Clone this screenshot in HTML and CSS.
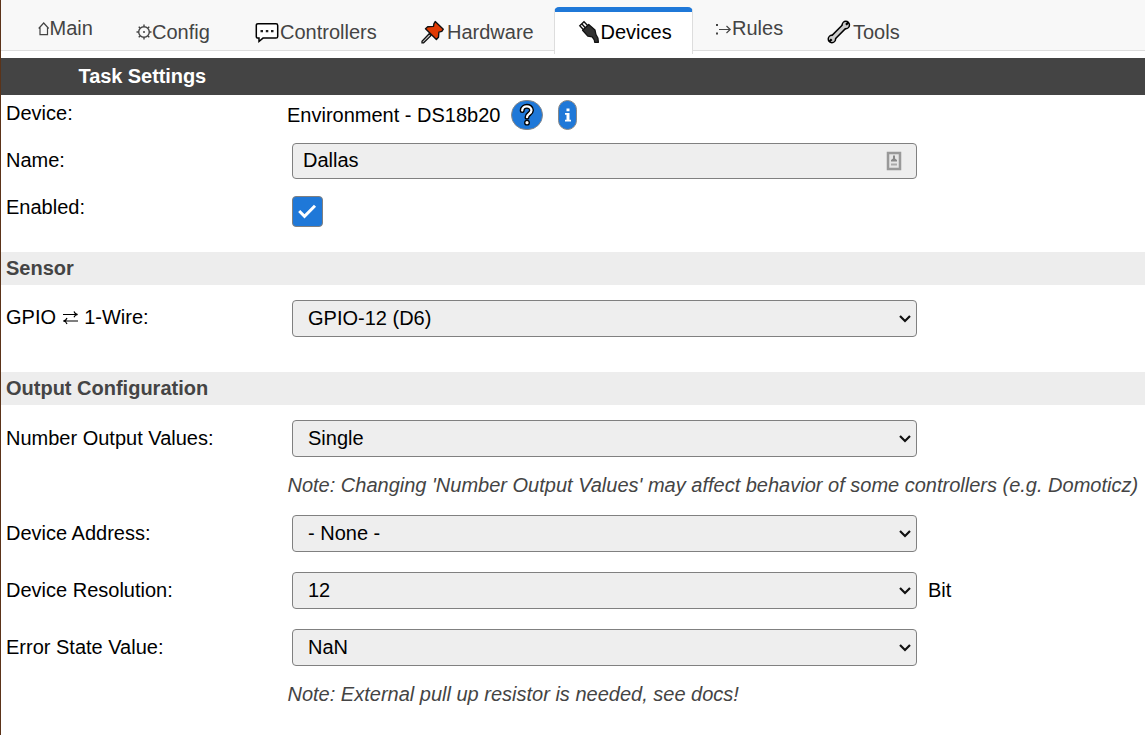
FILE: index.html
```html
<!DOCTYPE html>
<html lang="en">
<head>
<meta charset="utf-8">
<title>Task Settings</title>
<link rel="stylesheet" href="styles.css">
</head>
<body>
<nav class="tabs">
  <a class="tab raised main"><svg class="ico" width="12" height="22" viewBox="0 0 12 22"><path d="M.7 12.500 5.700 7l5 5.500M2 11.500v7.100h7.500v-7.100" fill="none" stroke="#444" stroke-width="1.200"/></svg><span class="t-main">Main</span></a>
  <a class="tab"><svg class="ico" width="16" height="24" viewBox="0 0 16 24"><circle cx="8" cy="12" r="5.300" fill="none" stroke="#444" stroke-width="1.400"/><circle cx="8" cy="12" r="1" fill="#444"/><path d="M8 4.500v2M8 17.500v2M.5 12h2M13.500 12h2M2.700 6.700l1.400 1.400M11.900 15.900l1.400 1.400M2.700 17.300l1.400-1.400M11.900 8.100l1.400-1.400" stroke="#444" stroke-width="1.400"/></svg><span class="t-config">Config</span></a>
  <a class="tab"><svg class="ico" width="25" height="24" viewBox="0 0 25 24"><path d="M3 3.700h18q1.700 0 1.700 1.700v11q0 1.700-1.700 1.700H8L4 21.500v-3.400H3q-1.700 0-1.700-1.700v-11q0-1.700 1.700-1.700z" fill="#fff" stroke="#000" stroke-width="1.500"/><path d="M5.500 10h2.500v2.300H5.500zM10.800 10h2.500v2.300h-2.500zM16 10h2.500v2.300H16z" fill="#222"/></svg><span class="t-controllers">Controllers</span></a>
  <a class="tab"><svg class="ico" width="25" height="24" viewBox="0 0 25 24"><path d="M8.200 13.800 1 21.200v1.600h1.600l7.400-7.200z" fill="#ccc" stroke="#111" stroke-width="1.300"/><path d="M14.200 1.600 22.300 9.200l-1.500 2.200-2.900.7-.4 5.200-2.100 2.200L4.500 8.700l2.200-1.900 5.800-.4.400-2.600z" fill="#e03a04" stroke="#111" stroke-width="1.400" stroke-linejoin="round"/></svg><span class="t-hardware">Hardware</span></a>
  <a class="tab active"><svg class="ico" width="23" height="24" viewBox="0 0 23 24"><path d="M1.800 5.800 6 1.800l5 5.200-4.300 4z" fill="#fff" stroke="#111" stroke-width="1.400"/><path d="m3.900 4 5 5.500" stroke="#111" stroke-width="1.400"/><path d="m4.600 10.200 6.100-5.700 6.300 5.600.9 4.300q2.600 3.200 2.500 7.900h-3.700q-.2-3.400-2.500-5.400l-4.400-.8z" fill="#303030" stroke="#111" stroke-width="1.300" stroke-linejoin="round"/></svg><span class="t-devices">Devices</span></a>
  <a class="tab raised rules"><svg class="ico" width="17" height="24" viewBox="0 0 17 24"><path d="M1 8h2v2H1zM1 16.500h2v2H1z" fill="#444"/><path d="M4 13.500h11.500M11.500 10l3.700 3.500-3.700 3.500" fill="none" stroke="#444" stroke-width="1.200"/></svg><span class="t-rules">Rules</span></a>
  <a class="tab"><svg class="ico" width="25" height="24" viewBox="0 0 25 24"><path d="M5 18.800 18.500 5.200" stroke="#000" stroke-width="6.200"/><circle cx="18.800" cy="5" r="4.400"/><circle cx="4.900" cy="19" r="4.400"/><path d="M5 18.800 18.500 5.200" stroke="#ccc" stroke-width="3.200"/><circle cx="18.800" cy="5" r="2.900" fill="#ccc"/><circle cx="4.900" cy="19" r="2.900" fill="#ccc"/><path d="m19 4.700 2.600-2.600M4.700 19.200l-2.600 2.600" stroke="#000" stroke-width="2.200"/></svg><span class="t-tools">Tools</span></a>
</nav>
<h1 class="title">Task Settings</h1>
<main>
  <div class="row device"><span class="label">Device:</span>
    <div class="value"><span class="env">Environment - DS18b20</span>
      <span class="pill help"><svg width="18" height="24" viewBox="0 0 18 24"><path d="M4.200 7.500C4.200 2 13.500 2 13.500 7.300c0 3.700-4.500 3.400-4.500 6.900" fill="none" stroke="#000" stroke-width="5" stroke-linecap="round"/><circle cx="9" cy="19.700" r="2.900" fill="#000"/><path d="M4.200 7.500C4.200 2 13.500 2 13.500 7.300c0 3.700-4.500 3.400-4.500 6.900" fill="none" stroke="#fff" stroke-width="2.300" stroke-linecap="round"/><circle cx="9" cy="19.700" r="1.600" fill="#fff"/></svg></span>
      <span class="pill info"><svg width="8" height="16" viewBox="0 0 8 16"><path d="M2.500 1.500h3v2.700h-3zM1 6h4.500v6.700H7V14.500H1v-1.800h1.500V7.700H1z" fill="#fff"/></svg></span></div></div>
  <div class="row name"><span class="label">Name:</span><div class="control input"><span class="t-dallas">Dallas</span><svg class="card" width="16" height="20" viewBox="0 0 16 20"><path d="M2 2h12v16H2z" fill="#e6e6e6" stroke="#999" stroke-width="2.500"/><path d="M7 4.500h2v3l2 1.500v1.500H5V9l2-1.500z" fill="#888"/><path d="M5 12.500h6v2H5z" fill="#aaa"/></svg></div></div>
  <div class="row enabled"><span class="label">Enabled:</span><span class="check"><svg width="21" height="18" viewBox="0 0 21 18"><path d="m2.200 8 5.300 5.300L18 2.800" fill="none" stroke="#fff" stroke-width="3"/></svg></span></div>
  <h2 class="section">Sensor</h2>
  <div class="row gpio"><span class="label">GPIO <svg class="swap" width="17" height="16" viewBox="0 0 17 16"><path d="M1 4.500h14.500M12 1.500q.7 2.500 3.700 3M16 11H1.500M5 8q-.7 2.500-3.700 3 3 .5 3.700 3M12 7.200q.7-2.200 3.700-2.700" fill="none" stroke="#000" stroke-width="1.200"/></svg> 1-Wire:</span><div class="control select"><span>GPIO-12 (D6)</span><svg class="chev" width="14" height="10" viewBox="0 0 14 10"><path d="m2 2 5 5 5-5" fill="none" stroke="#111" stroke-width="2.200"/></svg></div></div>
  <h2 class="section">Output Configuration</h2>
  <div class="row number"><span class="label">Number Output Values:</span><div class="control select"><span>Single</span><svg class="chev" width="14" height="10" viewBox="0 0 14 10"><path d="m2 2 5 5 5-5" fill="none" stroke="#111" stroke-width="2.200"/></svg></div></div>
  <p class="note"><span class="t-note">Note: Changing 'Number Output Values' may affect behavior of some controllers (e.g. Domoticz)</span></p>
  <div class="row"><span class="label">Device Address:</span><div class="control select"><span>- None -</span><svg class="chev" width="14" height="10" viewBox="0 0 14 10"><path d="m2 2 5 5 5-5" fill="none" stroke="#111" stroke-width="2.200"/></svg></div></div>
  <div class="row"><span class="label">Device Resolution:</span><div class="control select"><span>12</span><svg class="chev" width="14" height="10" viewBox="0 0 14 10"><path d="m2 2 5 5 5-5" fill="none" stroke="#111" stroke-width="2.200"/></svg></div><span class="unit">Bit</span></div>
  <div class="row"><span class="label">Error State Value:</span><div class="control select"><span>NaN</span><svg class="chev" width="14" height="10" viewBox="0 0 14 10"><path d="m2 2 5 5 5-5" fill="none" stroke="#111" stroke-width="2.200"/></svg></div></div>
  <p class="note last"><span>Note: External pull up resistor is needed, see docs!</span></p>
</main>
</body>
</html>
```
FILE: styles.css
```css
* { box-sizing: border-box; }
body {
  margin: 0;
  height: 735px;
  overflow: hidden;
  border-left: 1px solid #5b3319;
  background: #fff;
  color: #000;
  font: 20px/24px "Liberation Sans", Arial, sans-serif;
  white-space: nowrap;
}
.tabs {
  display: grid;
  grid-template-columns: 98px 119px 166px 155px 139px 113px 140px;
  padding: 7px 0 0 15px;
  height: 51px;
  margin-bottom: 7px;
  background: #f8f8f8;
  border-bottom: 1px solid #ddd;
}
.tab {
  display: flex;
  align-items: flex-start;
  height: 43px;
  padding: 13px 0 0 22px;
  color: #444;
}
.tab.raised { padding-top: 9px; }
.tab.main { padding-left: 21.500px; }
.tab:nth-child(7) { padding-left: 21px; }
.tab.active {
  height: 47px;
  padding-top: 8px;
  padding-left: 22.500px;
  border: 1px solid #ddd;
  border-top: 5px solid #1f78d8;
  border-bottom: 0;
  border-radius: 5px 5px 0 0;
  background: #fff;
  color: #000;
}
.ico { flex: none; }
.tab:nth-child(4) .ico, .tab:nth-child(7) .ico { margin-right: 1px; }
.title {
  margin: 0;
  height: 37px;
  padding: 6px 0 0 77.500px;
  background: #444;
  color: #fff;
  font-size: 20px;
  line-height: 24px;
  letter-spacing: -0.07px;
}
.row {
  display: grid;
  grid-template-columns: 291px 625px auto;
  align-items: start;
  height: 57px;
  padding-top: 8px;
}
.label { padding: 6px 0 0 5px; }
.device { height: 48px; padding-top: 0; }
.value { display: flex; align-items: center; height: 40px; margin-left: -5px; }
.env { width: 214px; }
.pill {
  display: flex;
  align-items: center;
  justify-content: center;
  height: 30px;
  border: 1px solid #888;
  background: #1f78d8;
}
.help { width: 32px; margin-left: 10px; border-radius: 15px; }
.info { width: 19px; margin-left: 15px; border-radius: 10px; }
.name { height: 48px; padding-top: 0; }
.name .label { padding-top: 5px; }
.enabled { height: 61px; padding-top: 5px; }
.enabled .label { padding-top: 0; margin-top: -1px; }
.check {
  display: flex;
  align-items: center;
  justify-content: center;
  width: 31px;
  height: 31px;
  border: 1px solid #808080;
  border-radius: 4px;
  background: #1f78d8;
}
.section {
  margin: 0;
  height: 33px;
  padding: 4px 0 0 5px;
  background: #ededed;
  color: #444;
  font-size: 20px;
  line-height: 24px;
}
.control {
  display: flex;
  align-items: center;
  justify-content: space-between;
  height: 37px;
  border: 1px solid #808080;
  border-radius: 4px;
  background: #eee;
}
.input { height: 36px; padding: 0 14px 2px 10px; }
.card { margin-top: 2px; }
.select { padding: 0 4px 2px 15px; }
.chev { margin-top: 3px; }
.gpio { height: 87px; padding-top: 15px; }
.gpio .label { padding-top: 5px; }
.swap { vertical-align: -2px; }
.number { height: 62px; padding-top: 15px; }
.note {
  margin: 0;
  height: 40px;
  padding: 6px 0 0 286.500px;
  color: #444;
  font-style: italic;
}
.last { padding-top: 4px; }
.unit { padding: 6px 0 0 11px; }
```
